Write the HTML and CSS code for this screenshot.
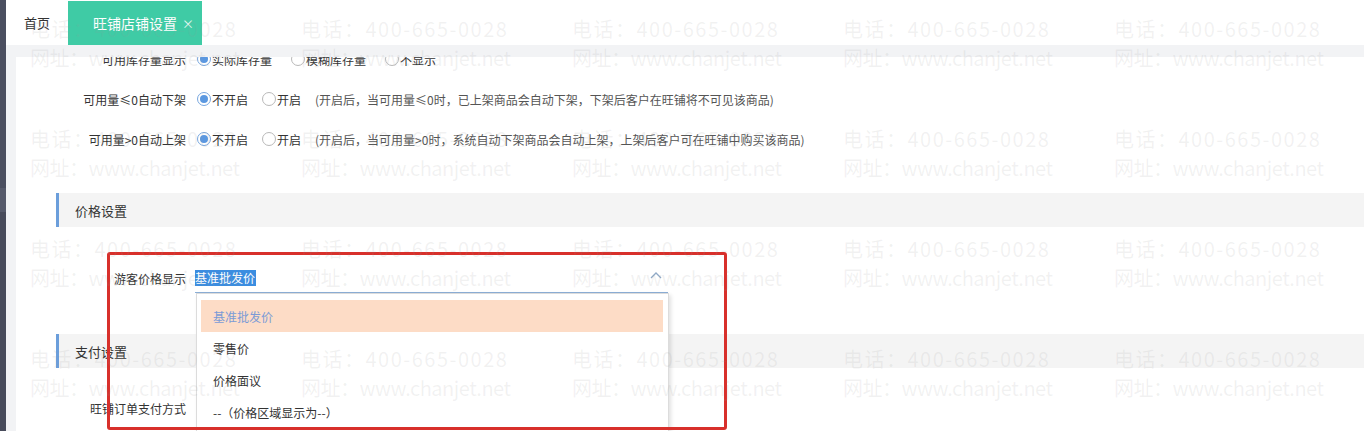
FILE: index.html
```html
<!DOCTYPE html>
<html lang="zh-CN">
<head>
<meta charset="utf-8">
<title>旺铺店铺设置</title>
<link rel="stylesheet" href="styles.css">
</head>
<body>
<div class="app">
  <aside class="sidebar">
    <div class="sb-block sb-a"></div>
    <div class="sb-block sb-b"></div>
    <div class="sb-block sb-c"></div>
  </aside>
  <div class="main">
    <header class="tabbar">
      <div class="tab">首页</div>
      <div class="tab tab-active">旺铺店铺设置<span class="tab-close">×</span></div>
    </header>
    <div class="workspace">
      <div class="card">
        <div class="card-scroll">
          <div class="form-row">
            <div class="label">可用库存量显示</div>
            <div class="controls">
              <label class="radio-opt wide"><span class="radio checked"></span>实际库存量</label>
              <label class="radio-opt wide"><span class="radio"></span>模糊库存量</label>
              <label class="radio-opt wide"><span class="radio"></span>不显示</label>
            </div>
          </div>
          <div class="form-row">
            <div class="label">可用量≤0自动下架</div>
            <div class="controls">
              <label class="radio-opt"><span class="radio checked"></span>不开启</label>
              <label class="radio-opt"><span class="radio"></span>开启</label>
              <span class="hint">(开启后，当可用量≤0时，已上架商品会自动下架，下架后客户在旺铺将不可见该商品)</span>
            </div>
          </div>
          <div class="form-row">
            <div class="label">可用量&gt;0自动上架</div>
            <div class="controls">
              <label class="radio-opt"><span class="radio checked"></span>不开启</label>
              <label class="radio-opt"><span class="radio"></span>开启</label>
              <span class="hint">(开启后，当可用量&gt;0时，系统自动下架商品会自动上架，上架后客户可在旺铺中购买该商品)</span>
            </div>
          </div>

          <div class="section-title sec-price">价格设置</div>

          <div class="form-row select-row">
            <div class="label">游客价格显示</div>
            <div class="select">
              <span class="select-value"><span class="sel-text">基准批发价</span></span>
              <svg class="chevron" width="12" height="8" viewBox="0 0 12 8"><path d="M1 7 L6 2 L11 7" fill="none" stroke="#8fa9c6" stroke-width="1.3"/></svg>
              <ul class="dropdown">
                <li class="dd-item active">基准批发价</li>
                <li class="dd-item">零售价</li>
                <li class="dd-item">价格面议</li>
                <li class="dd-item">--（价格区域显示为--）</li>
              </ul>
            </div>
          </div>

          <div class="section-title sec-pay">支付设置</div>

          <div class="form-row pay-row">
            <div class="label">旺铺订单支付方式</div>
          </div>
        </div>
      </div>
    </div>
  </div>

  <div class="annotation"></div>

  <div class="watermark">
    <div class="wm"><span>电话：400-665-0028</span><span class="wm-url">网址：www.chanjet.net</span></div>
    <div class="wm"><span>电话：400-665-0028</span><span class="wm-url">网址：www.chanjet.net</span></div>
    <div class="wm"><span>电话：400-665-0028</span><span class="wm-url">网址：www.chanjet.net</span></div>
    <div class="wm"><span>电话：400-665-0028</span><span class="wm-url">网址：www.chanjet.net</span></div>
    <div class="wm"><span>电话：400-665-0028</span><span class="wm-url">网址：www.chanjet.net</span></div>
    <div class="wm"><span>电话：400-665-0028</span><span class="wm-url">网址：www.chanjet.net</span></div>
    <div class="wm"><span>电话：400-665-0028</span><span class="wm-url">网址：www.chanjet.net</span></div>
    <div class="wm"><span>电话：400-665-0028</span><span class="wm-url">网址：www.chanjet.net</span></div>
    <div class="wm"><span>电话：400-665-0028</span><span class="wm-url">网址：www.chanjet.net</span></div>
    <div class="wm"><span>电话：400-665-0028</span><span class="wm-url">网址：www.chanjet.net</span></div>
    <div class="wm"><span>电话：400-665-0028</span><span class="wm-url">网址：www.chanjet.net</span></div>
    <div class="wm"><span>电话：400-665-0028</span><span class="wm-url">网址：www.chanjet.net</span></div>
    <div class="wm"><span>电话：400-665-0028</span><span class="wm-url">网址：www.chanjet.net</span></div>
    <div class="wm"><span>电话：400-665-0028</span><span class="wm-url">网址：www.chanjet.net</span></div>
    <div class="wm"><span>电话：400-665-0028</span><span class="wm-url">网址：www.chanjet.net</span></div>
    <div class="wm"><span>电话：400-665-0028</span><span class="wm-url">网址：www.chanjet.net</span></div>
    <div class="wm"><span>电话：400-665-0028</span><span class="wm-url">网址：www.chanjet.net</span></div>
    <div class="wm"><span>电话：400-665-0028</span><span class="wm-url">网址：www.chanjet.net</span></div>
    <div class="wm"><span>电话：400-665-0028</span><span class="wm-url">网址：www.chanjet.net</span></div>
    <div class="wm"><span>电话：400-665-0028</span><span class="wm-url">网址：www.chanjet.net</span></div>
  </div>
</div>
</body>
</html>
```
FILE: styles.css
```css
* { box-sizing: border-box; }
html, body {
  margin: 0;
  padding: 0;
  height: 431px;
  overflow: hidden;
  background: #ffffff;
  font-family: "Noto Sans CJK SC", "Noto Sans", sans-serif;
  font-size: 12px;
  color: #333;
}
.app {
  position: relative;
  display: flex;
  width: 1364px;
  height: 431px;
  overflow: hidden;
}
.sidebar {
  width: 6px;
  flex: none;
  display: flex;
  flex-direction: column;
  background: #4a4d5d;
}
.sb-block { flex: none; }
.sb-a { height: 188px; background: #4b4f60; }
.sb-b { height: 24px; background: #565a6b; }
.sb-c { flex: 1; background: #484b5b; }

.main {
  flex: 1;
  display: flex;
  flex-direction: column;
  min-width: 0;
}
.tabbar {
  height: 45px;
  flex: none;
  display: flex;
  align-items: stretch;
  background: #fff;
}
.tab {
  display: flex;
  align-items: center;
  padding: 0 18px;
  font-size: 13px;
  color: #333;
}
.tab-active {
  margin-top: 1px;
  height: 44px;
  width: 134px;
  padding: 0 0 0 25px;
  background: #3fcba5;
  color: #fff;
  font-size: 14px;
}
.tab-close {
  margin-left: 5px;
  font-size: 12px;
  color: #e3f7f0;
}
.workspace {
  flex: 1;
  background: #f2f3f5;
  padding: 12px 0 0 10px;
  min-height: 0;
}
.card {
  height: 100%;
  background: #fff;
  overflow: hidden;
}
.card-scroll {
  margin-top: -18px;
}
.form-row {
  display: flex;
  align-items: center;
  height: 40px;
}
.label {
  width: 170px;
  flex: none;
  text-align: right;
  color: #333;
}
.controls {
  display: flex;
  align-items: center;
  margin-left: 11px;
}
.radio-opt {
  display: inline-flex;
  align-items: center;
  margin-right: 14px;
  color: #333;
}
.radio-opt.wide { margin-right: 19px; }
.radio {
  position: relative;
  width: 14px;
  height: 14px;
  margin-right: 1px;
  border: 1px solid #b9b9b9;
  border-radius: 50%;
  background: #fff;
}
.radio.checked { border-color: #78a7df; }
.radio.checked::after {
  content: "";
  position: absolute;
  left: 2px;
  top: 2px;
  width: 8px;
  height: 8px;
  border-radius: 50%;
  background: #5b98e0;
}
.hint {
  color: #555;
}
.section-title {
  height: 34px;
  display: flex;
  align-items: center;
  margin-left: 40px;
  padding-left: 16px;
  border-left: 3px solid #6b9edb;
  background: #f4f4f4;
  font-size: 13px;
  color: #333;
}
.sec-price { margin-top: 34px; }
.select-row {
  margin-top: 36px;
  height: 30px;
}
.select {
  position: relative;
  margin-left: 9px;
  width: 473px;
  height: 30px;
  display: flex;
  align-items: center;
  border-bottom: 1px solid #8cafd6;
}
.select-value { flex: 1; }
.sel-text {
  background: #3b8de0;
  color: #fff;
  padding: 0 1px 0 0;
  line-height: 16px;
  display: inline-block;
}
.chevron {
  margin-right: 6px;
  margin-top: -6px;
}
.dropdown {
  position: absolute;
  top: 30px;
  left: 1px;
  width: 473px;
  height: 160px;
  margin: 0;
  padding: 6px 5px 0 4px;
  list-style: none;
  background: #fff;
  border: 1px solid #dcdcdc;
  box-shadow: 2px 2px 4px rgba(0, 0, 0, 0.12);
  z-index: 2;
}
.dd-item {
  height: 32px;
  display: flex;
  align-items: center;
  padding-left: 12px;
  color: #333;
}
.dd-item.active {
  background: #fddcc6;
  color: #7b9bd6;
}
.sec-pay { margin-top: 41px; }
.pay-row { margin-top: 20px; }

.annotation {
  position: absolute;
  left: 107px;
  top: 252px;
  width: 620px;
  height: 178px;
  border: 3px solid #d8302b;
  border-radius: 3px;
  z-index: 5;
  pointer-events: none;
}
.watermark {
  position: absolute;
  left: 30px;
  top: 14px;
  display: grid;
  grid-template-columns: repeat(5, 271px);
  grid-auto-rows: 110px;
  z-index: 6;
  pointer-events: none;
}
.wm {
  display: flex;
  flex-direction: column;
  font-size: 20px;
  line-height: 29px;
  letter-spacing: 1.5px;
  white-space: nowrap;
  color: rgba(150, 150, 150, 0.13);
}
.wm-url {
  letter-spacing: -0.5px;
}
```
